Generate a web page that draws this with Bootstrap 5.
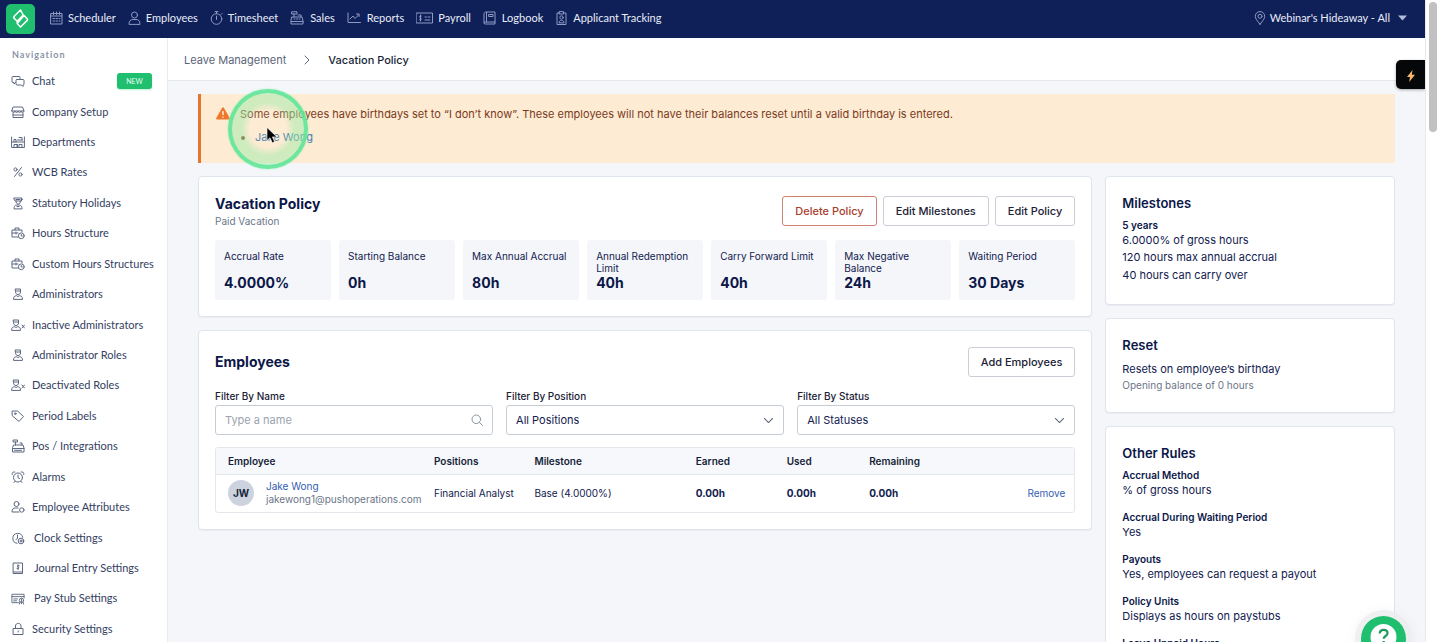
<!DOCTYPE html>
<html lang="en">
<head>
<meta charset="utf-8">
<meta name="viewport" content="width=device-width, initial-scale=1">
<title>Vacation Policy</title>
<link href="https://cdn.jsdelivr.net/npm/bootstrap@5.3.0/dist/css/bootstrap.min.css" rel="stylesheet">
<style>
:root { --ink:#12204f; --line:#dfe5ec; --green:#20be6f; }
body { font-family:Inter,"Liberation Sans",sans-serif; font-size:11px; line-height:18px; color:var(--ink); background:#f5f6fa; }
a { text-decoration:none; }
svg.ico { fill:none; stroke:currentColor; stroke-width:1; stroke-linecap:round; stroke-linejoin:round; flex:none; }
.lato { font-family:Lato,"Liberation Sans",sans-serif; }
.shell, .policy-col { min-width:0; }
.below-bar { min-height:0; }
.topbar { flex:none; height:38px; background:#0f2059; font-size:11px; padding:0 18px 2px 6px; }
.topbar a { color:#e9edf8; white-space:nowrap; }
.topbar .ico { color:#8d9ac4; }
.main-links { gap:12px; }
.main-links a { gap:5px; }
.main-links .roomy { gap:6px; }
.main-links .brand-tile { width:29px; height:30px; border-radius:5px; background:var(--green); margin:1px 3px 0 0; }
.side { width:168px; flex:none; background:#fff; border-right:1px solid #e9ebef; }
.side-head { flex:none; font-size:9px; font-weight:700; letter-spacing:1px; color:#8a94a8; padding:8px 12px 0; height:28px; }
.side-list { margin-bottom:-2px; }
.side-list li { flex:1 1 30px; display:flex; }
.side-list a { flex:1; display:flex; align-items:center; gap:7px; padding:0 15px 0 11px; color:#33405f; white-space:nowrap; }
.side-list .ico { color:#5d6880; }
.side-list .wide { gap:9px; }
.tag-new { background:var(--green); color:#eafff3; font-size:7px; line-height:16px; width:35px; border-radius:3px; text-align:center; box-shadow:0 1px 2px #b9efd3; }
.crumbs { height:43px; background:#fff; border-bottom:1px solid #e4e8ec; padding:2px 16px 0; gap:18px; }
.crumbs a, .crumbs .ico { color:#5b6579; }
.crumbs span { color:#171f38; font-weight:500; }
.body-area { padding:13px 30px 0; }
.notice { background:#fdebd3; border-left:3px solid #e37532; color:#7b3a1c; padding:11px 15px 17px; gap:10px; margin-bottom:13px; min-height:69px; }
.notice ul { padding-left:15px; margin:5px 0 0; }
.notice a { color:#4580b0; }
.warn { margin-top:2px; flex:none; }
.pulse { position:absolute; left:27px; top:-5px; width:80px; height:80px; border-radius:50%; border:4px solid rgba(92,229,151,.85); background:radial-gradient(circle,rgba(255,240,215,.1) 36%,rgba(160,236,170,.5) 52%); box-shadow:0 0 2px #8df0b5; }
.pointer { position:absolute; left:65px; top:33px; }
.split { gap:13px; }
.aside-col { flex:0 0 24.2%; gap:13px; }
.panel { background:#fff; border:1px solid var(--line); border-radius:4px; box-shadow:0 1px 1px #e9ecf1; padding:16px; }
.aside-col .panel { padding:17px 16px 20px; }
.panel h1,.panel h2 { font-size:14px; line-height:20px; font-weight:700; margin:0; color:#0b1748; }
.panel h3 { font-size:13px; line-height:18px; font-weight:600; margin:0 0 6px; color:#0b1748; }
.muted { color:#6b7689; font-size:10px; line-height:14px; }
.btn-line { font-size:11px; font-weight:500; line-height:18px; padding:5px 12px; border:1px solid #cbced6; border-radius:3px; color:#1b2236; background:#fff; }
.btn-line.danger { color:#a9402c; border-color:#cf8174; }
.title-block { padding-top:1px; }
.actions { gap:6px; padding-top:1px; }
.tile-row { gap:8px; display:grid; grid-template-columns:repeat(7,1fr); margin-top:12px; }
.tile { background:#f4f6fa; border-radius:3px; padding:10px 9px 8px; min-height:60px; }
.tile span { display:block; font-size:10px; line-height:12px; height:24px; }
.tile strong { display:block; font-size:14px; line-height:18px; color:#0b1748; }
.filters { display:grid; grid-template-columns:repeat(3,1fr); gap:13px; margin-top:12px; }
.filters label { font-size:10px; font-weight:500; line-height:14px; color:#1b2236; display:block; margin-bottom:2px; }
.filters .form-control,.filters .form-select { font-size:11px; line-height:18px; height:30px; padding:5px 9px; border:1px solid #c5ccd6; border-radius:3px; color:var(--ink); }
.filters .form-select { background-size:11px 11px; background-position:right 9px center; background-image:url("data:image/svg+xml,%3csvg xmlns='http://www.w3.org/2000/svg' viewBox='0 0 16 16'%3e%3cpath fill='none' stroke='%23596377' stroke-width='1.5' stroke-linecap='round' stroke-linejoin='round' d='M2 5l6 6 6-6'/%3e%3c/svg%3e"); }
.filters input::placeholder { color:#9aa2af; }
.find { position:absolute; right:10px; bottom:9px; color:#8a94a4; }
.grid-wrap { border:1px solid #e3e7ec; border-radius:3px; margin-top:12px; }
.grid-wrap table { width:100%; table-layout:fixed; font-size:10px; line-height:13px; }
.grid-wrap th { background:#f6f8fb; font-weight:600; color:#171f38; height:26px; padding:1px 12px 0; border-bottom:1px solid #e3e7ec; }
.grid-wrap td { height:38px; padding:0 12px; vertical-align:middle; white-space:nowrap; }
.grid-wrap td:last-child { padding-right:9px; }
.col-who { width:24%; } .col-pos { width:11.7%; } .col-mile { width:18.8%; } .col-earn { width:10.6%; } .col-used { width:9.6%; }
.who { gap:12px; }
.who .mail { color:#6b7689; }
.link-blue { color:#3560b2; }
.face { flex:none; width:26px; height:26px; border-radius:50%; background:#ccd3de; font-weight:700; line-height:26px; text-align:center; color:#171f38; }
dl { margin:0; } dd,dt { margin:0; }
dt { font-size:10px; line-height:14px; font-weight:600; color:#0b1748; }
dd { font-size:11px; line-height:16px; }
dd + dd { line-height:18px; }
dd + dt { margin-top:12px; }
.quick { position:absolute; right:0; top:22px; width:29px; height:29px; border:0; padding:0; border-radius:5px 0 0 5px; background:#050709; box-shadow:0 1px 3px #0005; z-index:3; }
.help { position:absolute; right:19px; bottom:-19px; width:45px; height:45px; border:0; padding:0; border-radius:50%; background:var(--green); box-shadow:0 0 0 6px #eceeefcc,0 2px 14px 6px #0000000c; z-index:3; }
.track { width:13px; flex:none; background:#fff; border-left:1px solid #e8e9ec; padding:2px 1px 0 3px; }
.thumb { height:130px; width:8px; border-radius:4px; background:#c1c1c1; }
</style>
</head>
<body class="vh-100 d-flex overflow-hidden">
<svg width="0" height="0" class="position-absolute" aria-hidden="true">
  <symbol id="cal" viewBox="0 0 13 14"><path d="M1 2.500h11v10.500H1zM1 5h11M3.500 1v2.500M6.500 1v2.500M9.500 1v2.500M3 7.500h1.500M6 7.500h1.500M9 7.500h1M3 10h1.500M6 10h1.500M9 10h1"/></symbol>
  <symbol id="user" viewBox="0 0 13 14"><circle cx="6.500" cy="4" r="3"/><path d="M1 13c0-3 1.500-4.500 4-4.500h3c2.500 0 4 1.500 4 4.500z"/></symbol>
  <symbol id="watch" viewBox="0 0 13 14"><circle cx="6.500" cy="8" r="5.300"/><path d="M6.500 2.500V1M5 .6h3M6.500 5v3.500M11 3.500l1-1"/></symbol>
  <symbol id="till" viewBox="0 0 14 14"><path d="M2 6h10l1 4v3H1v-3zM1 10.500h12M4 6V3M2 .8h5V3H2zM4 8h1M6.500 8h1M9 8h1M8 4h3v2"/></symbol>
  <symbol id="chart" viewBox="0 0 14 14"><path d="M1 2v9.500h12.500M3 8l3-3 2 2.500 4-4M9.500 3H12v2.500"/></symbol>
  <symbol id="cheque" viewBox="0 0 17 14"><path d="M.5 2h16v10H.5zM9 6h1.500M12 6h2M9 9h5M5.500 5c-2-1-2.500 1.500-1 2s1 2.500-1 1.700M4.500 4v6"/></symbol>
  <symbol id="book" viewBox="0 0 13 14"><path d="M3.500 1H12v10H3c-1.500 0-2 .5-2 1s.5 1 2 1h9v-2M1 12V2.500C1 1.500 2 1 3.500 1v10M6 3.500h4v2H6z"/></symbol>
  <symbol id="idcard" viewBox="0 0 13 14"><path d="M4.500 2H2v11.500h9V2H8.500M4.500.6h4V3h-4zM4 11.500c0-3 5-3 5 0z"/><circle cx="6.500" cy="6.500" r="1.700"/></symbol>
  <symbol id="pin" viewBox="0 0 12 14"><path d="M6 13.300C3 9.500 1.300 7.500 1.300 5.300a4.700 4.700 0 0 1 9.400 0c0 2.200-1.700 4.200-4.700 8z"/><circle cx="6" cy="5.300" r="2"/></symbol>
  <symbol id="chat" viewBox="0 0 14 14"><path d="M4.500 8.500 3 10V8.500H2c-.8 0-1-.4-1-1v-4c0-.7.400-1 1-1h6c.7 0 1 .3 1 1V5M6 5.500h6c.7 0 1 .3 1 1v3.500c0 .7-.3 1-1 1v1.500L10.500 11H6c-.6 0-1-.3-1-1V6.500c0-.6.400-1 1-1z"/></symbol>
  <symbol id="store" viewBox="0 0 14 14"><path d="M2.500 2h9l1.500 4H1zM1 6c0 2 3 2 3 0 0 2 3 2 3 0 0 2 3 2 3 0 0 2 3 2 3 0M2 8v4.500h10V8M2 10h10"/></symbol>
  <symbol id="dept" viewBox="0 0 14 14"><path d="M.6 2v10.500h12.800V2M.6 7h12.800M3 12V9.500h3V12M8 12V9.500h3V12M3 7V4.500h2V7M6.500 5h5M8 2.500h3v2.500M6.500 9.500V12"/></symbol>
  <symbol id="pct" viewBox="0 0 14 14"><path d="m10.500 2.500-7 9"/><circle cx="4.500" cy="4.500" r="1.600"/><circle cx="9.500" cy="9.500" r="1.600"/></symbol>
  <symbol id="holiday" viewBox="0 0 14 14"><path d="M3 2h7.500v3H4.500zM5 5c0 2 .7 3 2 3s2.500-1 2.500-3M3 12.500c0-3 1.500-3.500 4-3.500s4 .5 4 3.500zM10.500 2l1 1.500M5 3.500h4M6 10.500h2"/></symbol>
  <symbol id="case" viewBox="0 0 14 14"><path d="M7 11H1V4h10v2M4 4V2h4v2M1 7h6M5 6v2"/><circle cx="10.300" cy="9.800" r="2.900"/><path d="M10.300 8.500V10h1"/></symbol>
  <symbol id="admin" viewBox="0 0 14 14"><path d="M4.500 2h5v3c0 1.500-1 2.500-2.500 2.500S4.500 6.500 4.500 5zM4.500 4h5M2.500 12c0-2.500 1-3 3-3.300L7 9.500l1.500-.8c2 .3 3 .8 3 3.300z"/></symbol>
  <symbol id="adminx" viewBox="0 0 14 14"><path d="M2.500 2h5v3c0 1.500-1 2.500-2.500 2.500S2.500 6.500 2.500 5zM2.500 4h5M.6 12c0-2.500 1-3 3-3.300L5 9.500l1.500-.8c2 .3 3 .8 3 3.300zM11 7l2.500 3M13.500 7 11 10"/></symbol>
  <symbol id="label" viewBox="0 0 14 14"><path d="M1.500 2h5l6 5.500-4.500 5L1.500 7z"/><circle cx="4.300" cy="4.700" r=".8"/></symbol>
  <symbol id="pos" viewBox="0 0 14 14"><path d="M3 6h9l1 3v4H1.500V9zM1.500 9.500H13M4.500 6V3M2.500 1h4v2h-4zM3.500 11.300h7M9 4h2v2"/></symbol>
  <symbol id="alarm" viewBox="0 0 14 14"><circle cx="7" cy="7.500" r="4.500"/><path d="M7 5v2.700l1.500.8M1.200 4.500c-.5-2 1-3 2.700-2.500M12.800 4.500c.5-2-1-3-2.700-2.500M4 11.300 3 12.500M10 11.300l1 1.200"/></symbol>
  <symbol id="attr" viewBox="0 0 14 14"><circle cx="5.500" cy="4" r="2.500"/><path d="M8 12H1c0-2.800 1-4 3.500-4H7"/><circle cx="10.800" cy="10" r="2.200"/></symbol>
  <symbol id="clock" viewBox="0 0 14 14"><path d="M6 12.300a5 5 0 1 1 5.700-6M6.500 4v3.500l-1.500 1"/><circle cx="10" cy="10" r="2.800"/><circle cx="10" cy="10" r="1"/></symbol>
  <symbol id="journal" viewBox="0 0 14 14"><path d="M2.500 2h9v10.500h-9zM2.500 11h9M8.300 4.700c-2-.8-2.500.8-1.300 1.300s1.500 2-1 1.500M7 3.800v4.700"/></symbol>
  <symbol id="stub" viewBox="0 0 15 14"><path d="M8 12H1V3h13v4M1 5.500h13M3 8h4M3 10h3"/><circle cx="11.200" cy="9.500" r="2.300"/><path d="M11.200 8v5M9.500 11.500 9 13.500M13 11.500l.5 2"/></symbol>
  <symbol id="lock" viewBox="0 0 14 14"><path d="M2.500 6.500h9.500V12.500H2.500zM4.500 6.500V4c0-3.500 5.500-3.500 5.500 0v2.500M7.200 9v1"/></symbol>
</svg>

<div class="shell flex-grow-1 d-flex flex-column">
  <header class="topbar d-flex align-items-center justify-content-between lato">
    <nav class="main-links d-flex align-items-center" aria-label="Main">
      <a href="#" class="brand-tile d-flex align-items-center justify-content-center" aria-label="Home">
        <svg width="19" height="21" viewBox="0 0 19 21" fill="none" stroke="#fff" stroke-width="1.500" stroke-linejoin="round"><path d="M9.500 2 3 8.500c-.6.600-.6 1 0 1.600l3.200 3.200 6-6.300zM13 7.500l3.200 3.300c.6.600.6 1 0 1.600L9.500 19l-3.300-3.400zM6.200 13.300v2.300"/></svg></a>
      <a href="#" class="d-flex align-items-center"><svg class="ico" width="13" height="14"><use href="#cal"/></svg>Scheduler</a>
      <a href="#" class="d-flex align-items-center"><svg class="ico" width="13" height="14"><use href="#user"/></svg>Employees</a>
      <a href="#" class="d-flex align-items-center"><svg class="ico" width="13" height="14"><use href="#watch"/></svg>Timesheet</a>
      <a href="#" class="roomy d-flex align-items-center"><svg class="ico" width="14" height="14"><use href="#till"/></svg>Sales</a>
      <a href="#" class="roomy d-flex align-items-center"><svg class="ico" width="14" height="14"><use href="#chart"/></svg>Reports</a>
      <a href="#" class="d-flex align-items-center"><svg class="ico" width="17" height="14"><use href="#cheque"/></svg>Payroll</a>
      <a href="#" class="roomy d-flex align-items-center"><svg class="ico" width="13" height="14"><use href="#book"/></svg>Logbook</a>
      <a href="#" class="d-flex align-items-center"><svg class="ico" width="13" height="14"><use href="#idcard"/></svg>Applicant Tracking</a>
    </nav>
    <a href="#" class="d-flex align-items-center"><svg class="ico me-1" width="12" height="14"><use href="#pin"/></svg>Webinar's Hideaway - All<svg class="ms-2" width="9" height="6" viewBox="0 0 9 6"><path d="M0 .5h9L4.500 5.500z" fill="#b4bcd8"/></svg></a>
  </header>

  <div class="below-bar d-flex flex-grow-1">
    <aside class="side lato d-flex flex-column">
      <div class="side-head">Navigation</div>
      <ul class="side-list list-unstyled d-flex flex-column flex-grow-1">
        <li><a href="#"><svg class="ico" width="14" height="14"><use href="#chat"/></svg>Chat<span class="tag-new ms-auto">NEW</span></a></li>
        <li><a href="#"><svg class="ico" width="14" height="14"><use href="#store"/></svg>Company Setup</a></li>
        <li><a href="#"><svg class="ico" width="14" height="14"><use href="#dept"/></svg>Departments</a></li>
        <li><a href="#"><svg class="ico" width="14" height="14"><use href="#pct"/></svg>WCB Rates</a></li>
        <li><a href="#"><svg class="ico" width="14" height="14"><use href="#holiday"/></svg>Statutory Holidays</a></li>
        <li><a href="#"><svg class="ico" width="14" height="14"><use href="#case"/></svg>Hours Structure</a></li>
        <li><a href="#"><svg class="ico" width="14" height="14"><use href="#case"/></svg>Custom Hours Structures</a></li>
        <li><a href="#"><svg class="ico" width="14" height="14"><use href="#admin"/></svg>Administrators</a></li>
        <li><a href="#"><svg class="ico" width="14" height="14"><use href="#adminx"/></svg>Inactive Administrators</a></li>
        <li><a href="#"><svg class="ico" width="14" height="14"><use href="#admin"/></svg>Administrator Roles</a></li>
        <li><a href="#"><svg class="ico" width="14" height="14"><use href="#adminx"/></svg>Deactivated Roles</a></li>
        <li><a href="#"><svg class="ico" width="14" height="14"><use href="#label"/></svg>Period Labels</a></li>
        <li><a href="#"><svg class="ico" width="14" height="14"><use href="#pos"/></svg>Pos / Integrations</a></li>
        <li><a href="#"><svg class="ico" width="14" height="14"><use href="#alarm"/></svg>Alarms</a></li>
        <li><a href="#"><svg class="ico" width="14" height="14"><use href="#attr"/></svg>Employee Attributes</a></li>
        <li><a href="#" class="wide"><svg class="ico" width="14" height="14"><use href="#clock"/></svg>Clock Settings</a></li>
        <li><a href="#" class="wide"><svg class="ico" width="14" height="14"><use href="#journal"/></svg>Journal Entry Settings</a></li>
        <li><a href="#" class="wide"><svg class="ico" width="14" height="14"><use href="#stub"/></svg>Pay Stub Settings</a></li>
        <li><a href="#"><svg class="ico" width="14" height="14"><use href="#lock"/></svg>Security Settings</a></li>
      </ul>
    </aside>

    <main class="flex-grow-1 position-relative overflow-hidden">
      <nav class="crumbs d-flex align-items-center" aria-label="Breadcrumb">
        <a href="#">Leave Management</a>
        <svg class="ico" width="6" height="10" viewBox="0 0 6 10"><path d="m1 1 4 4-4 4"/></svg>
        <span>Vacation Policy</span>
      </nav>
      <div class="body-area">
        <div class="notice position-relative d-flex" role="alert">
          <svg class="warn" width="14" height="13" viewBox="0 0 14 13"><path d="M6 .9c.5-.8 1.500-.8 2 0l5.700 10c.4.800 0 1.600-1 1.600H1.300c-1 0-1.400-.8-1-1.600z" fill="#f0762b"/><path d="M7 4v4M7 9.500v1.200" stroke="#fdebd3" stroke-width="1.500"/></svg>
          <div>
            <div>Some employees have birthdays set to “I don’t know”. These employees will not have their balances reset until a valid birthday is entered.</div>
            <ul><li><a href="#">Jake Wong</a></li></ul>
          </div>
          <span class="pulse"></span>
          <svg class="pointer" width="12" height="18" viewBox="0 0 12 18"><path d="M1 .5v13l3-2.700 2.300 5 2.300-1-2.200-4.900h4.400z" fill="#000" stroke="#fff" stroke-width=".6"/></svg>
        </div>
        <div class="split d-flex align-items-start">
          <div class="policy-col split flex-grow-1 d-flex flex-column">
            <section class="panel">
              <div class="d-flex justify-content-between">
                <div class="title-block"><h1>Vacation Policy</h1><div class="muted">Paid Vacation</div></div>
                <div class="actions d-flex align-items-center">
                  <button class="btn-line danger" type="button">Delete Policy</button>
                  <button class="btn-line" type="button">Edit Milestones</button>
                  <button class="btn-line" type="button">Edit Policy</button>
                </div>
              </div>
              <div class="tile-row">
                <div class="tile"><span>Accrual Rate</span><strong>4.0000%</strong></div>
                <div class="tile"><span>Starting Balance</span><strong>0h</strong></div>
                <div class="tile"><span>Max Annual Accrual</span><strong>80h</strong></div>
                <div class="tile"><span>Annual Redemption Limit</span><strong>40h</strong></div>
                <div class="tile"><span>Carry Forward Limit</span><strong>40h</strong></div>
                <div class="tile"><span>Max Negative Balance</span><strong>24h</strong></div>
                <div class="tile"><span>Waiting Period</span><strong>30 Days</strong></div>
              </div>
            </section>
            <section class="panel">
              <div class="d-flex justify-content-between align-items-center">
                <h2>Employees</h2><button class="btn-line" type="button">Add Employees</button>
              </div>
              <div class="filters">
                <div class="position-relative"><label for="fn">Filter By Name</label><input id="fn" class="form-control" type="text" placeholder="Type a name"><svg class="ico find" width="12" height="12" viewBox="0 0 12 12"><circle cx="5.300" cy="5.300" r="4.300"/><path d="m8.500 8.500 3 3"/></svg></div>
                <div><label for="fp">Filter By Position</label><select id="fp" class="form-select"><option>All Positions</option></select></div>
                <div><label for="fs">Filter By Status</label><select id="fs" class="form-select"><option>All Statuses</option></select></div>
              </div>
              <div class="grid-wrap">
                <table>
                  <colgroup><col class="col-who"><col class="col-pos"><col class="col-mile"><col class="col-earn"><col class="col-used"><col><col></colgroup>
                  <thead><tr><th>Employee</th><th>Positions</th><th>Milestone</th><th>Earned</th><th>Used</th><th>Remaining</th><th></th></tr></thead>
                  <tbody><tr>
                    <td><div class="who d-flex align-items-center"><span class="face">JW</span><div><a class="link-blue" href="#">Jake Wong</a><div class="mail">jakewong1@pushoperations.com</div></div></div></td>
                    <td>Financial Analyst</td><td>Base (4.0000%)</td><td class="fw-bold">0.00h</td><td class="fw-bold">0.00h</td><td class="fw-bold">0.00h</td><td class="text-end"><a class="link-blue" href="#">Remove</a></td>
                  </tr></tbody>
                </table>
              </div>
            </section>
          </div>
          <div class="aside-col d-flex flex-column">
            <section class="panel">
              <h3>Milestones</h3>
              <dl><dt>5 years</dt><dd>6.0000% of gross hours</dd><dd>120 hours max annual accrual</dd><dd>40 hours can carry over</dd></dl>
            </section>
            <section class="panel">
              <h3>Reset</h3>
              <div>Resets on employee’s birthday</div><div class="muted">Opening balance of 0 hours</div>
            </section>
            <section class="panel">
              <h3>Other Rules</h3>
              <dl>
                <dt>Accrual Method</dt><dd>% of gross hours</dd>
                <dt>Accrual During Waiting Period</dt><dd>Yes</dd>
                <dt>Payouts</dt><dd>Yes, employees can request a payout</dd>
                <dt>Policy Units</dt><dd>Displays as hours on paystubs</dd>
                <dt>Leave Unpaid Hours</dt>
              </dl>
            </section>
          </div>
        </div>
      </div>
      <button class="quick" type="button" aria-label="Quick actions"><svg width="10" height="12" viewBox="0 0 10 12"><path d="M6.500 0 1 7h3l-.8 5L9 4.800H5.800z" fill="#f9b870"/></svg></button>
      <button class="help" type="button" aria-label="Help"><svg width="45" height="45" viewBox="0 0 45 45"><circle cx="22.500" cy="21" r="13" fill="#fff"/><path d="M18.700 17.500c.3-5 7.800-4.500 7.800-.3 0 2.800-3.800 2.800-3.800 5.600M22.700 25v2" fill="none" stroke="#1d9a5d" stroke-width="2.200"/></svg></button>
    </main>
  </div>
</div>
<div class="track" aria-hidden="true"><div class="thumb"></div></div>
<script src="https://cdn.jsdelivr.net/npm/bootstrap@5.3.0/dist/js/bootstrap.bundle.min.js"></script>
</body>
</html>
